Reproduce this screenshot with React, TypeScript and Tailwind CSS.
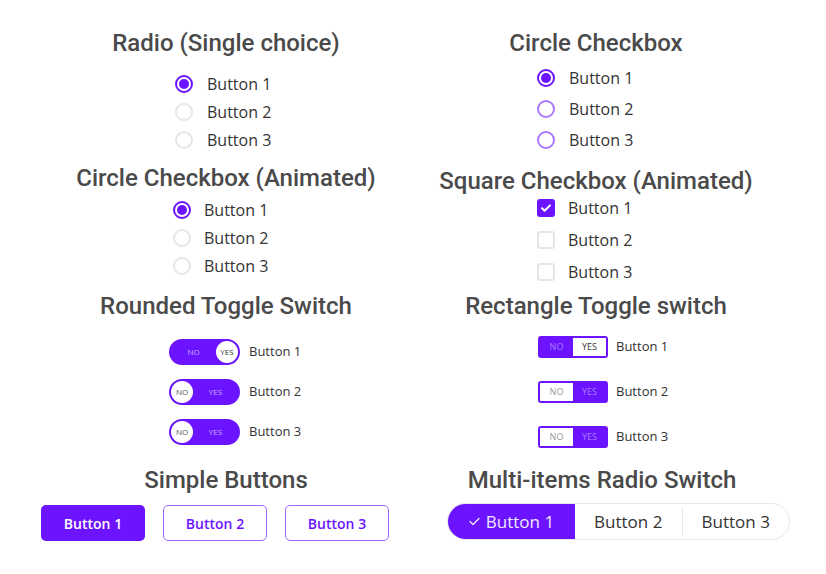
import React from 'react';

const purple = 'bg-[#6c14ff]';

const Heading = ({ children, className = '' }: { children: React.ReactNode; className?: string }) => (
    <h2 className={`font-['Roboto',sans-serif] font-medium text-[24px] leading-7 text-[#4a4a4a] text-center whitespace-nowrap ${className}`}>
        {children}
    </h2>
);

const Label = ({ children, size = 'text-[16px]' }: { children: React.ReactNode; size?: string }) => (
    <span className={`font-['Open_Sans',sans-serif] ${size} text-[#333]`}>{children}</span>
);

const Radio = ({ on, ring }: { on: boolean; ring: string }) => (
    <span className={`w-[18px] h-[18px] rounded-full border-2 grid place-content-center ${on ? 'border-[#6c14ff]' : ring}`}>
        {on && <span className={`w-[10px] h-[10px] rounded-full ${purple}`} />}
    </span>
);

const Square = ({ on }: { on: boolean }) => (
    <span className={`w-[18px] h-[18px] rounded-[3px] grid place-content-center ${on ? purple : 'border-2 border-[#e6e6e6]'}`}>
        {on && (
            <svg width="12" height="12" viewBox="0 0 12 12" fill="none">
                <path d="M2 6.2l2.6 2.6L10 3.4" stroke="white" strokeWidth="2" strokeLinecap="round" strokeLinejoin="round" />
            </svg>
        )}
    </span>
);

const RoundToggle = ({ on }: { on: boolean }) => (
    <span className={`w-[71px] h-[26px] rounded-full border-2 border-[#6c14ff] ${purple} flex items-center font-['Open_Sans',sans-serif] text-[8px]`}>
        {on ? (
            <>
                <span className="flex-1 text-center text-[#c9adff]">NO</span>
                <span className="w-[22px] h-[22px] rounded-full bg-white grid place-content-center text-[#333]">YES</span>
            </>
        ) : (
            <>
                <span className="w-[22px] h-[22px] rounded-full bg-white grid place-content-center text-[#555]">NO</span>
                <span className="flex-1 text-center text-[#c9adff]">YES</span>
            </>
        )}
    </span>
);

const RectToggle = ({ on }: { on: boolean }) => (
    <span className={`w-[70px] h-[22px] rounded-[3px] border-2 border-[#6c14ff] ${purple} flex font-['Open_Sans',sans-serif] text-[9px]`}>
        <span className={`flex-1 grid place-content-center ${on ? 'text-[#a77cff]' : 'bg-white text-[#999]'}`}>NO</span>
        <span className={`flex-1 grid place-content-center ${on ? 'bg-white text-[#333]' : 'text-[#a77cff]'}`}>YES</span>
    </span>
);

const items = ['Button 1', 'Button 2', 'Button 3'];

const App = () => {
    return (
        <div className="w-[826px] h-[574px] bg-white pl-[41px] pt-[29px] grid grid-cols-[370px_370px]">
            {/* left column */}
            <div className="flex flex-col">
                <Heading>Radio (Single choice)</Heading>
                <div className="flex flex-col mt-[13px] ml-[134px]">
                    {items.map((t, i) => (
                        <div key={t} className="h-[28px] flex items-center gap-[14px]">
                            <Radio on={i === 0} ring="border-[#e6e6e6]" />
                            <Label>{t}</Label>
                        </div>
                    ))}
                </div>

                <Heading className="mt-[10px]">Circle Checkbox (Animated)</Heading>
                <div className="flex flex-col mt-[4px] ml-[132px]">
                    {items.map((t, i) => (
                        <div key={t} className="h-[28px] flex items-center gap-[13px]">
                            <Radio on={i === 0} ring="border-[#e6e6e6]" />
                            <Label>{t}</Label>
                        </div>
                    ))}
                </div>

                <Heading className="mt-[12px]">Rounded Toggle Switch</Heading>
                <div className="flex flex-col mt-[12px] ml-[128px]">
                    {items.map((t, i) => (
                        <div key={t} className="h-[40px] flex items-center gap-[9px]">
                            <RoundToggle on={i === 0} />
                            <Label size="text-[13px]">{t}</Label>
                        </div>
                    ))}
                </div>

                <Heading className="mt-[14px]">Simple Buttons</Heading>
                <div className="flex gap-[18px] mt-[11px] font-['Open_Sans',sans-serif] text-[14px] font-semibold">
                    <button className={`w-[104px] h-[36px] rounded-[5px] ${purple} text-white`}>Button 1</button>
                    <button className="w-[104px] h-[36px] rounded-[5px] border border-[#9a66ff] text-[#6c14ff] bg-white">Button 2</button>
                    <button className="w-[104px] h-[36px] rounded-[5px] border border-[#9a66ff] text-[#6c14ff] bg-white">Button 3</button>
                </div>
            </div>

            {/* right column */}
            <div className="flex flex-col">
                <Heading>Circle Checkbox</Heading>
                <div className="flex flex-col mt-[5px] ml-[126px]">
                    {items.map((t, i) => (
                        <div key={t} className="h-[31px] flex items-center gap-[14px]">
                            <Radio on={i === 0} ring="border-[#a878ff]" />
                            <Label>{t}</Label>
                        </div>
                    ))}
                </div>

                <Heading className="mt-[12px]">Square Checkbox (Animated)</Heading>
                <div className="flex flex-col mt-[-3px] ml-[126px]">
                    {items.map((t, i) => (
                        <div key={t} className="h-[32px] flex items-center gap-[13px]">
                            <Square on={i === 0} />
                            <Label>{t}</Label>
                        </div>
                    ))}
                </div>

                <Heading className="mt-[4px]">Rectangle Toggle switch</Heading>
                <div className="flex flex-col mt-[4px] ml-[127px]">
                    {items.map((t, i) => (
                        <div key={t} className="h-[45px] flex items-center gap-[8px]">
                            <RectToggle on={i === 0} />
                            <Label size="text-[13px]">{t}</Label>
                        </div>
                    ))}
                </div>

                <Heading className="mt-[7px] ml-[12px]">Multi-items Radio Switch</Heading>
                <div className="mt-[9px] ml-[36px] w-[343px] h-[37px] rounded-full border border-[#e8e8e8] flex overflow-hidden font-['Open_Sans',sans-serif] text-[17px]">
                    <div className={`w-[127px] ${purple} flex items-center justify-center gap-[6px] text-[#f1eaff]`}>
                        <svg width="11" height="9" viewBox="0 0 11 9" fill="none">
                            <path d="M1 4.5l3 3L10 1.5" stroke="currentColor" strokeWidth="1.3" strokeLinecap="round" strokeLinejoin="round" />
                        </svg>
                        <span>Button 1</span>
                    </div>
                    <div className="flex-1 flex items-center justify-center text-[#333]">Button 2</div>
                    <div className="w-px h-[27px] self-center bg-[#e6e6e6]" />
                    <div className="flex-1 flex items-center justify-center text-[#333]">Button 3</div>
                </div>
            </div>
        </div>
    );
};

export default App;
